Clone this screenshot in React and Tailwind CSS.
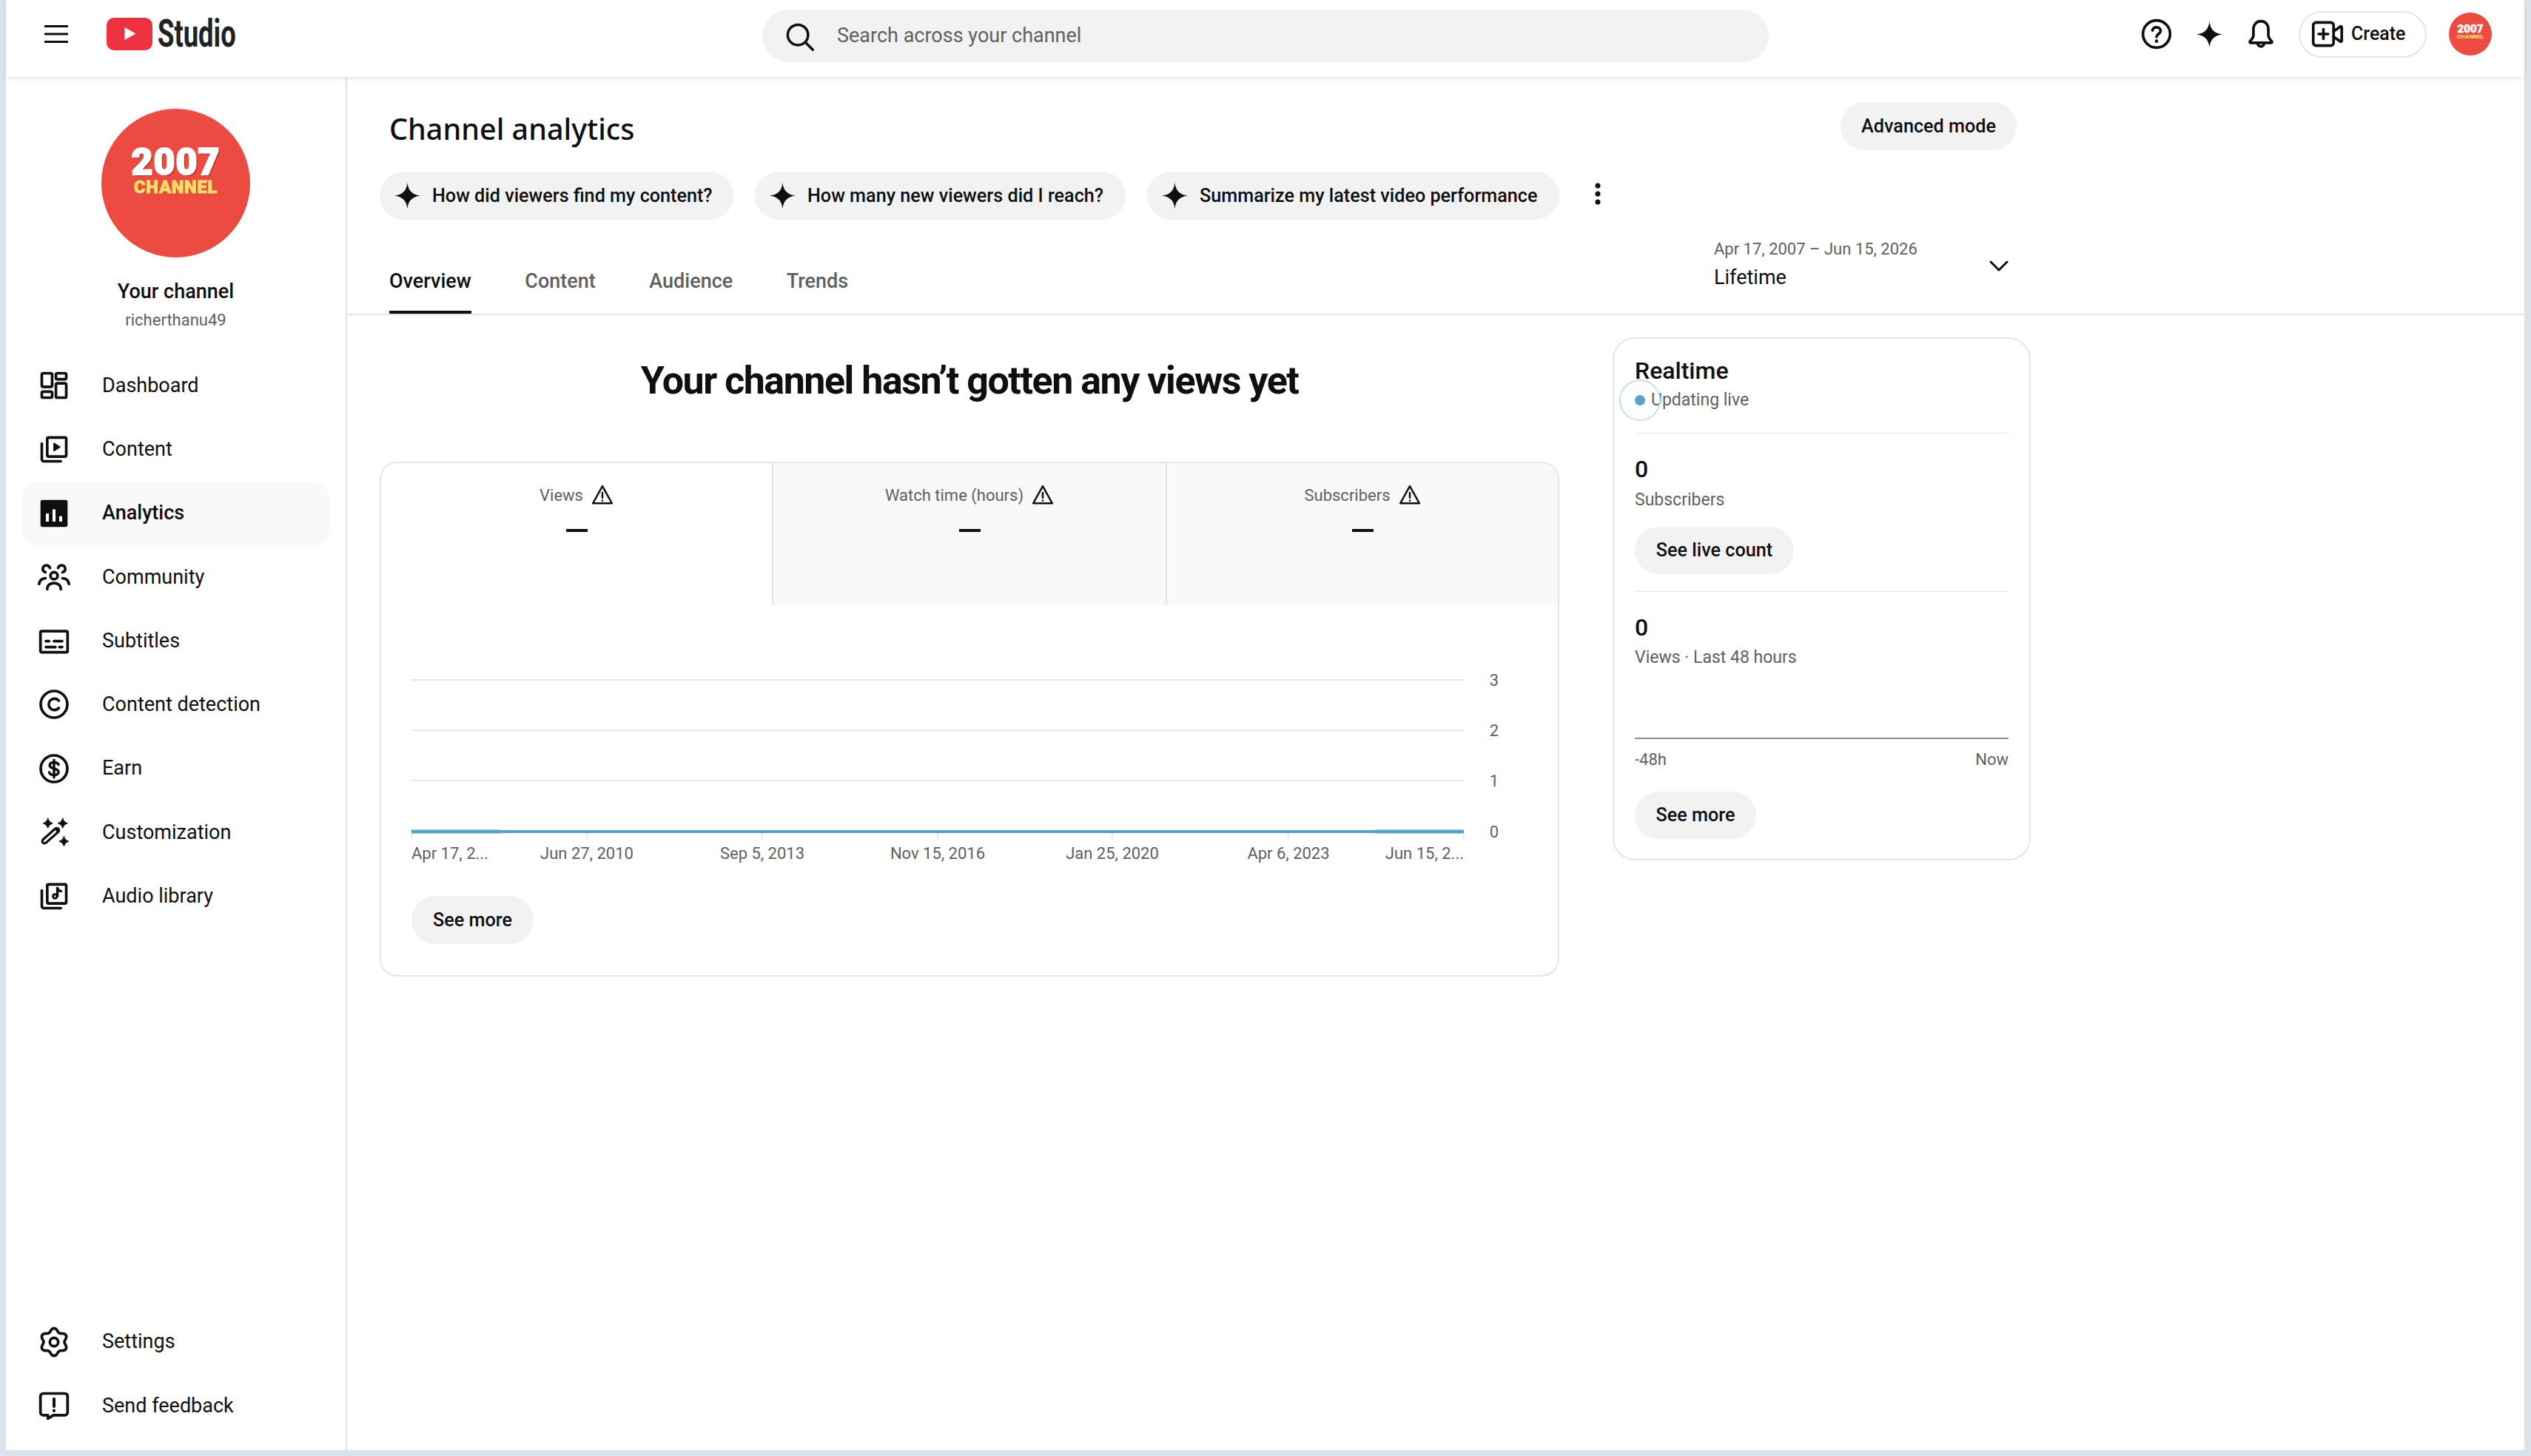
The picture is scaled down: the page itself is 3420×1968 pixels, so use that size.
import React from "react";

const sparklePath =
  "M12 0.5C12.7 7.6 16.4 11.3 23.5 12C16.4 12.7 12.7 16.4 12 23.5C11.3 16.4 7.6 12.7 0.5 12C7.6 11.3 11.3 7.6 12 0.5Z";

// small helper for the 4 point stars used in the wand icon
const star = (cx, cy, r) =>
  `M${cx} ${cy - r}Q${cx + r * 0.2} ${cy - r * 0.2} ${cx + r} ${cy}Q${cx + r * 0.2} ${cy + r * 0.2} ${cx} ${cy + r}Q${cx - r * 0.2} ${cy + r * 0.2} ${cx - r} ${cy}Q${cx - r * 0.2} ${cy - r * 0.2} ${cx} ${cy - r}Z`;

// gear outline with six soft lobes
const gearPath = (() => {
  let d = "";
  for (let i = 0; i <= 96; i++) {
    const t = (i / 96) * Math.PI * 2;
    const r = 8.9 + 1.25 * Math.cos(6 * t);
    const x = 12 + r * Math.sin(t);
    const y = 12 - r * Math.cos(t);
    d += `${i === 0 ? "M" : "L"}${x.toFixed(2)} ${y.toFixed(2)}`;
  }
  return d + "Z";
})();

function Icon({ children, className = "w-[44px] h-[44px]" }) {
  return (
    <svg
      viewBox="0 0 24 24"
      fill="none"
      stroke="#0f0f0f"
      strokeWidth="2"
      strokeLinecap="round"
      strokeLinejoin="round"
      className={`${className} shrink-0`}
    >
      {children}
    </svg>
  );
}

const DashboardIcon = () => (
  <Icon>
    <rect x="3" y="3" width="7.6" height="10" rx="1" />
    <rect x="3" y="16.6" width="7.6" height="4.4" rx="1" />
    <rect x="13.4" y="3" width="7.6" height="4.4" rx="1" />
    <rect x="13.4" y="10.4" width="7.6" height="10.6" rx="1" />
  </Icon>
);
const ContentIcon = () => (
  <Icon>
    <rect x="7" y="3.500" width="14" height="14" rx="1" />
    <path d="M12 7.800v5.400l4.200-2.700z" fill="#0f0f0f" strokeWidth="1" />
    <path d="M3 8v11.500a1.500 1.500 0 0 0 1.500 1.500H17" />
  </Icon>
);
const AnalyticsIcon = () => (
  <Icon>
    <rect x="2" y="2" width="20" height="20" rx="1.5" fill="#0f0f0f" stroke="none" />
    <path d="M6 12h2.2v6H6zM10.9 9h2.2v9h-2.2zM15.8 14h2.2v4h-2.2z" fill="#fff" stroke="none" />
  </Icon>
);
const CommunityIcon = () => (
  <Icon>
    <circle cx="12" cy="11" r="2.6" />
    <path d="M7 21c0-3 2.2-4.6 5-4.6s5 1.600 5 4.600" />
    <path d="M9 5.200C8.500 3.900 7.400 3.300 6.300 3.300 4.800 3.300 3.700 4.500 3.700 5.900c0 1.300.9 2.300 2 2.600" />
    <path d="M15 5.200c.5-1.300 1.600-1.900 2.700-1.900 1.500 0 2.600 1.200 2.600 2.600 0 1.300-.9 2.300-2 2.600" />
    <path d="M1 17c.4-2.400 2.200-4 4.700-4.100" />
    <path d="M23 17c-.4-2.400-2.200-4-4.700-4.100" />
  </Icon>
);
const SubtitlesIcon = () => (
  <Icon>
    <rect x="2" y="5" width="20" height="15.500" rx="1" />
    <path d="M6 12.300h2.300M12 12.300h6M6 16.700h7M16 16.700h2" />
  </Icon>
);
const CopyrightIcon = () => (
  <Icon>
    <circle cx="12" cy="12" r="9.800" />
    <path d="M15.500 9.300A4.200 4.200 0 0 0 12.300 7.800a4.200 4.200 0 1 0 0 8.400 4.200 4.200 0 0 0 3.200-1.500" />
  </Icon>
);
const EarnIcon = () => (
  <Icon>
    <circle cx="12" cy="12" r="9.800" />
    <path d="M15.300 9c-.4-1-1.500-1.700-3.300-1.700-1.900 0-3.200.9-3.200 2.300 0 3.200 6.500 1.600 6.500 4.800 0 1.400-1.400 2.300-3.300 2.300-1.900 0-3.100-.8-3.500-2M12 5.600v12.800" strokeWidth="1.900" />
  </Icon>
);
const WandIcon = () => (
  <Icon>
    <path d="M5 18.500L14 10.500" strokeWidth="5" />
    <path d="M5 18.500L13 11.400" strokeWidth="1.500" stroke="#fff" />
    <path d={star(7.500, 5.300, 3.600)} fill="#0f0f0f" strokeWidth="0.500" />
    <path d={star(18.400, 5.300, 3.600)} fill="#0f0f0f" strokeWidth="0.500" />
    <path d={star(19.300, 18.600, 3.600)} fill="#0f0f0f" strokeWidth="0.500" />
  </Icon>
);
const AudioIcon = () => (
  <Icon>
    <rect x="7" y="3.500" width="14" height="14" rx="1" />
    <path d="M14.500 6.200v6" strokeWidth="1.800" />
    <circle cx="12.700" cy="12.300" r="1.500" strokeWidth="1.600" />
    <path d="M14.500 6.200c.3 1.400 1.200 2.100 2.700 2.300" strokeWidth="1.800" />
    <path d="M3 8v11.500a1.500 1.500 0 0 0 1.500 1.500H17" />
  </Icon>
);
const SettingsIcon = () => (
  <Icon>
    <path d={gearPath} />
    <circle cx="12" cy="12" r="3.100" />
  </Icon>
);
const FeedbackIcon = () => (
  <Icon>
    <path d="M4 3h16a2 2 0 0 1 2 2v12a2 2 0 0 1-2 2h-8.500L7.500 21.500V19H4a2 2 0 0 1-2-2V5a2 2 0 0 1 2-2z" />
    <path d="M12 7v5.500M12 15.600v.2" strokeWidth="2.200" />
  </Icon>
);
const HelpIcon = () => (
  <Icon>
    <circle cx="12" cy="12" r="10" />
    <path d="M9 9.300C9.300 7.800 10.500 7 12 7c1.700 0 3 1 3 2.600 0 2.400-3 2.400-3 4.500" />
    <path d="M12 17.200v.1" strokeWidth="2.400" />
  </Icon>
);
const BellIcon = () => (
  <Icon>
    <path d="M12 2.500c-3.600 0-5.500 2.700-5.500 6v4.500c0 1.400-1.200 3-2.400 4.300-.5.600-.2 1.200.5 1.200h14.800c.7 0 1-.6.500-1.200-1.200-1.300-2.400-2.900-2.400-4.300V8.500c0-3.300-1.900-6-5.500-6z" />
    <path d="M9.600 18.800a2.400 2.400 0 0 0 4.800 0" />
  </Icon>
);
const CreateIcon = () => (
  <Icon>
    <rect x="1.500" y="3.500" width="15" height="17" rx="2" />
    <path d="M9 8.500v7M5.500 12h7" />
    <path d="M16.500 10l5-3.500c.5-.3 1 0 1 .6v9.800c0 .6-.5.900-1 .6l-5-3.500" />
  </Icon>
);

function Sparkle({ className = "w-[37px] h-[37px]" }) {
  return (
    <svg viewBox="0 0 24 24" className={`${className} shrink-0`}>
      <path d={sparklePath} fill="#0f0f0f" />
    </svg>
  );
}

function WarningIcon() {
  return (
    <svg viewBox="0 0 24 24" className="w-[30px] h-[30px] shrink-0" fill="none" stroke="#0f0f0f" strokeWidth="2" strokeLinejoin="round" strokeLinecap="round">
      <path d="M12 2.500L1.700 21h20.600z" />
      <path d="M12 9.500v5.500M12 18v.1" />
    </svg>
  );
}

function ChannelAvatar({ small }) {
  if (small) {
    return (
      <div className="w-[58px] h-[58px] rounded-full bg-[#ed4a41] flex flex-col items-center justify-center pb-[5px] font-black">
        <span className="text-[15px] leading-[11px] text-white [-webkit-text-stroke:0.5px_#fff]">2007</span>
        <span className="text-[8px] leading-[7px] text-[#f9dc6a] mt-[1px]">CHANNEL</span>
      </div>
    );
  }
  return (
    <div className="w-[201px] h-[201px] rounded-full bg-[#ed4a41] flex flex-col items-center justify-center pb-[32px] font-black">
      <span className="text-[50px] leading-[36px] text-white tracking-[1px] [-webkit-text-stroke:2px_#fff] [text-shadow:2px_2px_0_#a8352e]">2007</span>
      <span className="mt-[7px] text-[24px] leading-[18px] text-[#f9dc6a] tracking-[0.5px] [-webkit-text-stroke:0.8px_#f9dc6a] [text-shadow:1px_1px_0_#a8352e]">CHANNEL</span>
    </div>
  );
}

const mainNav = [
  { label: "Dashboard", icon: DashboardIcon },
  { label: "Content", icon: ContentIcon },
  { label: "Analytics", icon: AnalyticsIcon, active: true },
  { label: "Community", icon: CommunityIcon },
  { label: "Subtitles", icon: SubtitlesIcon },
  { label: "Content detection", icon: CopyrightIcon },
  { label: "Earn", icon: EarnIcon },
  { label: "Customization", icon: WandIcon },
  { label: "Audio library", icon: AudioIcon },
];

const bottomNav = [
  { label: "Settings", icon: SettingsIcon },
  { label: "Send feedback", icon: FeedbackIcon },
];

function NavItem({ item }) {
  const ItemIcon = item.icon;
  return (
    <div
      className={`mx-[22px] w-[415px] h-[86.250px] flex items-center gap-[43px] pl-[21px] rounded-[20px] text-[27px] text-[#0f0f0f] ${
        item.active ? "bg-[#f9f9f9] font-medium" : ""
      }`}
    >
      <ItemIcon />
      <span>{item.label}</span>
    </div>
  );
}

function Sidebar() {
  return (
    <aside className="w-[461px] shrink-0 border-r-2 border-[#e5e5e5] flex flex-col">
      <div className="flex flex-col items-center pt-[43px]">
        <ChannelAvatar />
        <div className="mt-[28px] text-[27px] leading-[36px] font-medium text-[#0f0f0f]">Your channel</div>
        <div className="mt-[7px] text-[22px] leading-[28px] text-[#606060]">richerthanu49</div>
      </div>
      <nav className="mt-[31px]">
        {mainNav.map((item) => (
          <NavItem key={item.label} item={item} />
        ))}
      </nav>
      <nav className="mt-auto pb-[17px]">
        {bottomNav.map((item) => (
          <NavItem key={item.label} item={item} />
        ))}
      </nav>
    </aside>
  );
}

function TopBar() {
  return (
    <header className="relative z-10 h-[104px] shrink-0 flex items-center pb-[12px] bg-white shadow-[0_2px_6px_rgba(0,0,0,0.1)]">
      <div className="w-[1022px] shrink-0 flex items-center pl-[52px]">
        <svg viewBox="0 0 32 26" className="w-[32px] h-[26px]">
          <path d="M1 2.500h30M1 13h30M1 23.500h30" stroke="#0f0f0f" strokeWidth="3" strokeLinecap="round" />
        </svg>
        <svg viewBox="0 0 62 44" className="w-[62px] h-[44px] ml-[52px] shrink-0">
          <rect width="62" height="44" rx="10" fill="#ee3240" />
          <path d="M24.500 13v17l15-8.500z" fill="#fff" />
        </svg>
        <span className="ml-[7px] w-[106px] text-[52px] leading-[52px] font-bold text-[#212121] inline-block origin-left scale-x-[0.7]">
          Studio
        </span>
      </div>
      <div className="w-[1360px] h-[71px] mt-[5px] shrink-0 rounded-full bg-[#f2f2f2] flex items-center pl-[28px]">
        <svg viewBox="0 0 24 24" className="w-[44px] h-[44px]" fill="none" stroke="#0f0f0f" strokeWidth="1.900" strokeLinecap="round">
          <circle cx="11" cy="11" r="7.500" />
          <path d="M16.500 16.500L22 22" />
        </svg>
        <span className="ml-[29px] text-[27px] text-[#606060]">Search across your channel</span>
      </div>
      <div className="flex-1 flex items-center justify-end pr-[44px]">
        <HelpIcon />
        <div className="w-[44px] h-[44px] ml-[27px] flex items-center justify-center">
          <Sparkle />
        </div>
        <div className="ml-[26px]">
          <BellIcon />
        </div>
        <div className="ml-[29px] w-[173px] h-[63px] rounded-full border-2 border-[#e5e5e5] flex items-center pl-[15px] gap-[10px] text-[25px] font-medium text-[#0f0f0f]">
          <CreateIcon />
          <span>Create</span>
        </div>
        <div className="ml-[30px]">
          <ChannelAvatar small />
        </div>
      </div>
    </header>
  );
}

function Pill({ children, className = "" }) {
  return (
    <div className={`h-[65px] rounded-full bg-[#f2f2f2] inline-flex items-center text-[25.200px] font-medium text-[#0f0f0f] ${className}`}>
      {children}
    </div>
  );
}

function AskChip({ text, width }) {
  return (
    <Pill className={`${width} pl-[19px] gap-[15px]`}>
      <Sparkle />
      <span>{text}</span>
    </Pill>
  );
}

function PageHeader() {
  return (
    <div className="h-[322px] shrink-0 border-b-2 border-[#e5e5e5] box-border pl-[44px]">
      <div className="w-[2212px] flex flex-col h-full">
        <div className="pt-[34px] flex items-center justify-between">
          <h1 className="pl-[13px] pt-[4px] h-[65px] font-['Noto_Sans',sans-serif] text-[39.500px] leading-[65px] font-medium text-[#0f0f0f]">Channel analytics</h1>
          <Pill className="w-[238px] justify-center">Advanced mode</Pill>
        </div>
        <div className="mt-[29px] flex items-center">
          <AskChip width="w-[478px]" text="How did viewers find my content?" />
          <div className="ml-[29px]">
            <AskChip width="w-[501px]" text="How many new viewers did I reach?" />
          </div>
          <div className="ml-[29px]">
            <AskChip width="w-[557px]" text="Summarize my latest video performance" />
          </div>
          <svg viewBox="0 0 8 30" className="ml-[48px] w-[8px] h-[30px] -mt-[6px]">
            <circle cx="4" cy="4" r="3.500" fill="#0f0f0f" />
            <circle cx="4" cy="15" r="3.500" fill="#0f0f0f" />
            <circle cx="4" cy="26" r="3.500" fill="#0f0f0f" />
          </svg>
        </div>
        <div className="flex-1 flex items-end justify-between">
          <div className="flex items-end gap-[72.500px] pl-[13px]">
            <div className="pb-[26px] leading-[36px] text-[27px] font-medium text-[#0f0f0f] relative">
              Overview
              <span className="absolute left-0 right-0 bottom-0 h-[4px] bg-[#0f0f0f]"></span>
            </div>
            {["Content", "Audience", "Trends"].map((tab) => (
              <div key={tab} className="pb-[26px] leading-[36px] text-[27px] font-medium text-[#606060]">
                {tab}
              </div>
            ))}
          </div>
          <div className="w-[409px] pr-[11px] pb-[31px] flex items-center justify-between">
            <div>
              <div className="text-[22px] leading-[32px] text-[#606060]">Apr 17, 2007 – Jun 15, 2026</div>
              <div className="mt-[4px] text-[27px] leading-[36px] text-[#0f0f0f]">Lifetime</div>
            </div>
            <svg viewBox="0 0 26 15" className="w-[26px] h-[15px] mt-[4px]" fill="none" stroke="#0f0f0f" strokeWidth="3" strokeLinecap="round" strokeLinejoin="round">
              <path d="M2 2l11 11L24 2" />
            </svg>
          </div>
        </div>
      </div>
    </div>
  );
}

function MetricTab({ label, active }) {
  return (
    <div className={`h-[192px] flex flex-col items-center pt-[28px] border-l-2 first:border-l-0 border-[#e5e5e5] ${active ? "bg-white" : "bg-[#f9f9f9]"}`}>
      <div className="flex items-center gap-[11px] h-[30px] text-[22px] text-[#606060]">
        <span>{label}</span>
        <WarningIcon />
      </div>
      <div className="mt-[31px] w-[29px] h-[4px] bg-[#0f0f0f]"></div>
    </div>
  );
}

const xTicks = [
  { x: 793, label: "Jun 27, 2010" },
  { x: 1030, label: "Sep 5, 2013" },
  { x: 1267, label: "Nov 15, 2016" },
  { x: 1503, label: "Jan 25, 2020" },
  { x: 1741, label: "Apr 6, 2023" },
];

function OverviewChart() {
  return (
    <svg viewBox="515 819 1590 362" className="block w-[1590px] h-[362px] font-['Roboto',sans-serif] text-[22px]">
      {[920, 988, 1056].map((y) => (
        <line key={y} x1="556" x2="1978" y1={y} y2={y} stroke="#e5e5e5" strokeWidth="2" />
      ))}
      {[556, 793, 1030, 1267, 1503, 1741, 1978].map((x) => (
        <line key={x} x1={x} x2={x} y1="1125" y2="1136" stroke="#e5e5e5" strokeWidth="1.500" />
      ))}
      <line x1="556" x2="1978" y1="1125" y2="1125" stroke="#57a3c9" strokeWidth="4" />
      <line x1="556" x2="676" y1="1125" y2="1125" stroke="#57a3c9" strokeWidth="5" />
      <line x1="1858" x2="1978" y1="1125" y2="1125" stroke="#57a3c9" strokeWidth="5" />
      {[
        { y: 920, t: "3" },
        { y: 988, t: "2" },
        { y: 1056, t: "1" },
        { y: 1125, t: "0" },
      ].map((v) => (
        <text key={v.t} x="2019" y={v.y + 8} textAnchor="middle" fill="#606060">
          {v.t}
        </text>
      ))}
      <text x="556" y="1162" fill="#606060">Apr 17, 2...</text>
      {xTicks.map((t) => (
        <text key={t.x} x={t.x} y="1162" textAnchor="middle" fill="#606060">
          {t.label}
        </text>
      ))}
      <text x="1978" y="1162" textAnchor="end" fill="#606060">Jun 15, 2...</text>
    </svg>
  );
}

function OverviewCard() {
  return (
    <div className="mt-[79px] w-[1594px] h-[696px] rounded-[24px] border-2 border-[#e5e5e5] overflow-hidden">
      <div className="grid grid-cols-[528px_532px_1fr]">
        <MetricTab label="Views" active />
        <MetricTab label="Watch time (hours)" />
        <MetricTab label="Subscribers" />
      </div>
      <OverviewChart />
      <Pill className="mt-[31px] ml-[41px] w-[165px] justify-center">See more</Pill>
    </div>
  );
}

function RealtimeCard() {
  return (
    <div className="w-[565px] rounded-[30px] border-2 border-[#e5e5e5] px-[28px] pt-[23px] pb-[27px] relative">
      <div className="text-[32px] leading-[40px] font-medium text-[#0f0f0f]">Realtime</div>
      <div className="mt-[4px] flex items-center h-[32px] text-[23px] text-[#606060] relative">
        <span className="w-[14px] h-[14px] rounded-full bg-[#57a3c9]"></span>
        <span className="ml-[8px]">Updating live</span>
        <span className="absolute -left-[21px] -top-[12px] w-[56px] h-[56px] rounded-full border-2 border-[#c5e0ec]"></span>
      </div>
      <div className="mt-[28px] h-[1px] bg-[#e5e5e5]"></div>
      <div className="mt-[28px] text-[32px] leading-[40px] font-medium text-[#0f0f0f]">0</div>
      <div className="mt-[6px] text-[23px] leading-[32px] text-[#606060]">Subscribers</div>
      <Pill className="mt-[20px] !h-[64px] w-[215px] justify-center">See live count</Pill>
      <div className="mt-[23px] h-[1px] bg-[#e5e5e5]"></div>
      <div className="mt-[28px] text-[32px] leading-[40px] font-medium text-[#0f0f0f]">0</div>
      <div className="mt-[5px] text-[23px] leading-[32px] text-[#606060]">Views · Last 48 hours</div>
      <div className="mt-[92px] h-[2px] bg-[#909090]"></div>
      <div className="mt-[14px] flex justify-between text-[22px] leading-[28px] text-[#606060]">
        <span>-48h</span>
        <span>Now</span>
      </div>
      <Pill className="mt-[29px] !h-[64px] w-[164px] justify-center">See more</Pill>
    </div>
  );
}

export default function App() {
  return (
    <div className="w-[3420px] h-[1968px] bg-[#dbe3ea] pl-[8px] pr-[9px] pb-[8px] font-['Roboto',sans-serif] overflow-hidden">
      <div className="h-full bg-white flex flex-col">
        <TopBar />
        <div className="flex-1 flex min-h-0">
          <Sidebar />
          <main className="flex-1 min-w-0">
            <PageHeader />
            <div className="flex items-start pl-[44px] gap-[72px] pt-[30px]">
              <div className="pt-[29px] w-[1594px]">
                <h2 className="text-center text-[52px] leading-[60px] font-bold tracking-[-1.500px] text-[#0f0f0f]">
                  Your channel hasn’t gotten any views yet
                </h2>
                <OverviewCard />
              </div>
              <RealtimeCard />
            </div>
          </main>
        </div>
      </div>
    </div>
  );
}
